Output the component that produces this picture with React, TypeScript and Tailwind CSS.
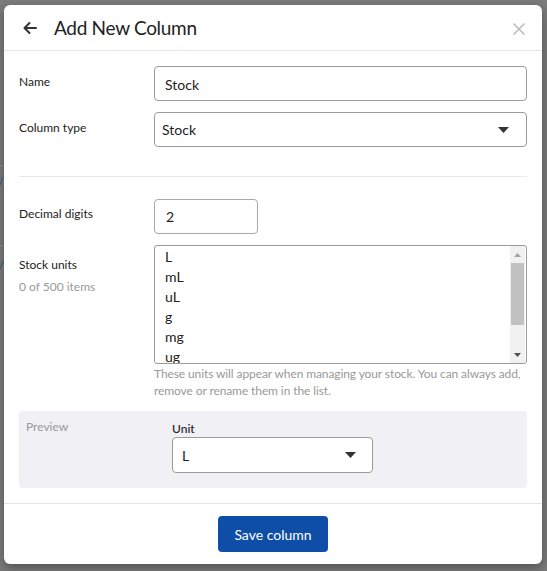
import React from "react";

const font = { fontFamily: "Lato, 'Noto Sans', sans-serif" };

function Caret() {
  return (
    <svg width="11" height="6" viewBox="0 0 11 6" className="shrink-0">
      <path d="M0 0 L11 0 L5.5 6 Z" fill="#333" />
    </svg>
  );
}

export default function App() {
  const units = ["L", "mL", "uL", "g", "mg", "ug"];
  return (
    <div className="relative w-full h-[571px] bg-[#7c7c7c] overflow-hidden pt-[5px] px-[4px]" style={font}>
      {/* faint page content behind overlay */}
      <div className="absolute left-0 top-[165px] w-[4px] h-px bg-[#8f8f8f]" />
      <div className="absolute left-0 top-[245px] w-[4px] h-px bg-[#8f8f8f]" />
      <svg className="absolute left-0 top-[176px]" width="4" height="10" viewBox="0 0 4 10">
        <path d="M0 9 L3 1" stroke="#3b5f96" strokeWidth="1" />
      </svg>
      <svg className="absolute left-0 top-[260px]" width="4" height="10" viewBox="0 0 4 10">
        <path d="M0 9 L3 1" stroke="#3b5f96" strokeWidth="1" />
      </svg>

      <div className="relative w-[538px] h-[559px] bg-white rounded-[6px] shadow-[0_4px_12px_rgba(0,0,0,0.35)] flex flex-col">
        {/* header */}
        <div className="h-[46px] flex items-center border-b border-[#e3e3e8] pl-[19px] pr-[17px]">
          <svg width="14" height="14" viewBox="0 0 14 14" className="mr-[17px] mt-[1px]">
            <path d="M13 7 H1.5 M6.5 2 L1.5 7 L6.5 12" stroke="#333" strokeWidth="2" fill="none" strokeLinecap="round" strokeLinejoin="round" />
          </svg>
          <div className="text-[19px] text-[#222] font-normal leading-none tracking-[-0.3px]">Add New Column</div>
          <div className="ml-auto mt-[2px]">
            <svg width="12" height="12" viewBox="0 0 12 12">
              <path d="M1 1 L11 11 M11 1 L1 11" stroke="#bbb" strokeWidth="1.6" strokeLinecap="round" />
            </svg>
          </div>
        </div>

        {/* body */}
        <div className="flex-1 px-[15px] pt-[15px]">
          <div className="flex items-start">
            <div className="w-[135px] pt-[9px] text-[12px] leading-[14px] text-[#222]">Name</div>
            <div className="flex-1 h-[35px] border border-[#9a9a9a] rounded-[4px] flex items-center pl-[10px] pt-[2px] text-[14px] text-[#222]">Stock</div>
          </div>
          <div className="flex items-start mt-[11px]">
            <div className="w-[135px] pt-[9px] text-[12px] leading-[14px] text-[#222]">Column type</div>
            <div className="flex-1 h-[35px] border border-[#9a9a9a] rounded-[4px] flex items-center pl-[7px] pr-[17px] text-[14px] text-[#222]">
              <span>Stock</span>
              <span className="ml-auto"><Caret /></span>
            </div>
          </div>

          <div className="h-px bg-[#e8e8ef] mt-[29px]" />

          <div className="flex items-start mt-[22px]">
            <div className="w-[135px] pt-[8px] text-[12px] leading-[14px] text-[#222]">Decimal digits</div>
            <div className="w-[104px] h-[35px] border border-[#a8a8a8] rounded-[4px] flex items-center pl-[11px] text-[14px] text-[#222]">2</div>
          </div>

          <div className="flex items-start mt-[11px]">
            <div className="w-[135px] pt-[13px]">
              <div className="text-[12px] leading-[14px] text-[#222]">Stock units</div>
              <div className="text-[12px] leading-[14px] text-[#999] mt-[8px]">0 of 500 items</div>
            </div>
            <div className="flex-1">
              <div className="h-[119px] border border-[#9a9a9a] rounded-[3px] flex overflow-hidden">
                <div className="flex-1 pl-[10px] pt-[1px] text-[14px] leading-[20px] text-[#222] overflow-hidden">
                  {units.map((u) => (
                    <div key={u}>{u}</div>
                  ))}
                </div>
                <div className="w-[15px] bg-[#f1f1f1] flex flex-col items-center mr-px">
                  <div className="h-[17px] flex items-center justify-center">
                    <svg width="7" height="4" viewBox="0 0 7 4"><path d="M0 4 L7 4 L3.5 0 Z" fill="#a3a3a3" /></svg>
                  </div>
                  <div className="w-[13px] h-[62px] bg-[#c1c1c1]" />
                  <div className="flex-1" />
                  <div className="h-[17px] flex items-center justify-center">
                    <svg width="7" height="4" viewBox="0 0 7 4"><path d="M0 0 L7 0 L3.5 4 Z" fill="#505050" /></svg>
                  </div>
                </div>
              </div>
              <div className="text-[12px] leading-[17px] text-[#999] mt-[1px] whitespace-nowrap tracking-[-0.1px]">
                These units will appear when managing your stock. You can always add,
                <br />
                remove or rename them in the list.
              </div>
            </div>
          </div>

          {/* preview */}
          <div className="mt-[12px] h-[77px] bg-[#f0f0f5] rounded-[4px] flex">
            <div className="w-[153px] pl-[7px] pt-[9px] text-[12px] leading-[14px] text-[#999]">Preview</div>
            <div className="pt-[11px]">
              <div className="text-[12px] leading-[14px] text-[#222] font-medium">Unit</div>
              <div className="mt-[1px] w-[201px] h-[36px] bg-white border border-[#9a9a9a] rounded-[4px] flex items-center pl-[9px] pr-[16px] text-[14px] text-[#222]">
                <span>L</span>
                <span className="ml-auto"><Caret /></span>
              </div>
            </div>
          </div>
        </div>

        {/* footer */}
        <div className="border-t border-[#e3e3e8] h-[61px] flex justify-center pt-[12px]">
          <div className="w-[110px] h-[36px] bg-[#0f4ea7] rounded-[4px] flex items-center justify-center text-white text-[14px]">
            Save column
          </div>
        </div>
      </div>
    </div>
  );
}
